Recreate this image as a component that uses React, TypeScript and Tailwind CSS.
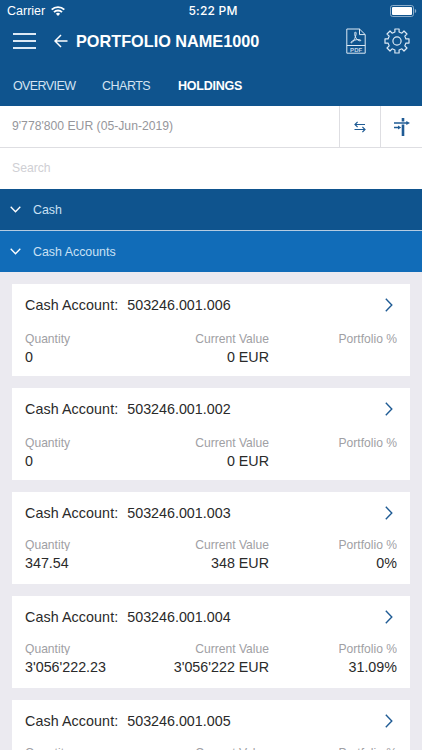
import { clsx } from 'clsx';

interface Holding {
  account: string;
  quantity: string;
  value: string;
  percent?: string;
}

const holdings: Holding[] = [
  { account: '503246.001.006', quantity: '0', value: '0 EUR' },
  { account: '503246.001.002', quantity: '0', value: '0 EUR' },
  { account: '503246.001.003', quantity: '347.54', value: '348 EUR', percent: '0%' },
  { account: '503246.001.004', quantity: "3'056'222.23", value: "3'056'222 EUR", percent: '31.09%' },
];

// Eight flat teeth, four points each
const gearPath =
  'M' +
  Array.from({ length: 8 })
    .flatMap((_, i) =>
      [
        [9.2, -13],
        [12.2, -10],
        [12.2, 10],
        [9.2, 13],
      ].map(([r, deg]) => {
        const a = ((i * 45 + deg) * Math.PI) / 180;
        return `${(13 + r * Math.cos(a)).toFixed(2)} ${(13 + r * Math.sin(a)).toFixed(2)}`;
      })
    )
    .join('L') +
  'Z';

const WifiIcon = () => (
  <svg width="14" height="10" viewBox="0 0 14 10" fill="none" stroke="#fff" strokeWidth="1.9">
    <path d="M.7 3.7a8.9 8.9 0 0 1 12.6 0" />
    <path d="M3 6.2a5.6 5.6 0 0 1 8 0" />
    <path d="M7 9.9 4.9 7.8a3 3 0 0 1 4.2 0Z" fill="#fff" stroke="none" />
  </svg>
);

const BatteryIcon = () => (
  <svg width="27" height="12" viewBox="0 0 27 12">
    <rect x=".5" y=".5" width="23" height="11" rx="2.2" fill="none" stroke="#8badcb" />
    <rect x="2" y="2" width="20" height="8" rx="1" fill="#fff" />
    <path d="M24.8 4v4c1-.3 1.4-1.1 1.4-2s-.4-1.7-1.4-2Z" fill="#8badcb" />
  </svg>
);

const PdfIcon = () => (
  <svg width="20" height="26" viewBox="0 0 20 26" fill="none" stroke="#dce9f5" strokeWidth="1">
    <path d="M.8 1h12.700l5.700 5.600v18.600H.8Z" />
    <path d="M13.500 1v5.600h5.700M.8 17.500h18.400" />
    <path
      d="M9.300 4c1.400 0 .8 3.600-.6 6.600-1.200 2.500-2.900 4.900-3.700 4.100-.9-1 3.500-2.800 5.900-3.100 1.700-.2 4-.1 3.800.9-.3 1.100-3.300-.3-4.700-2.400C8.600 8 8.300 4 9.300 4Z"
      strokeWidth="1"
    />
    <text x="10.200" y="23.800" textAnchor="middle" fontSize="6" fontWeight="bold" letterSpacing=".1" fill="#c3d7e9" stroke="none">
      PDF
    </text>
  </svg>
);

const GearIcon = () => (
  <svg width="26" height="26" viewBox="0 0 26 26" fill="none" stroke="#dce9f5" strokeWidth="1.200" strokeLinejoin="round">
    <path d={gearPath} />
    <circle cx="13" cy="13" r="4.100" />
  </svg>
);

const SwapIcon = () => (
  <svg width="12" height="12" viewBox="0 0 12 12" fill="none" stroke="#1f5b94" strokeWidth="1.200">
    <path d="M11 3.500H1M3.600.9 1 3.500l2.600 2.600M.5 8.500H11M8.400 5.900 11 8.500l-2.600 2.600" />
  </svg>
);

const AlignIcon = () => (
  <svg width="16" height="18" viewBox="0 0 16 18" fill="none" stroke="#1f5b94">
    <path d="M9 0v3.500M9 6.500V18" strokeWidth="2.600" />
    <path d="M0 5h13M0 9.500h5" strokeWidth="1.300" />
    <path d="M12.300 2.900v4.200L16 5ZM4 7.400v4.200l3.200-2.100Z" fill="#1f5b94" stroke="none" />
  </svg>
);

const SectionRow = ({ title, className }: { title: string; className: string }) => (
  <div className={clsx('flex shrink-0 items-center pl-[10px] text-[12.4px] text-[#c9e0f4]', className)}>
    <svg width="11" height="7" viewBox="0 0 11 7" fill="none" stroke="#fff" strokeWidth="1.300">
      <path d="m.7.7 4.800 5L10.300.7" />
    </svg>
    <span className="ml-3 pt-px">{title}</span>
  </div>
);

const Cell = ({ label, value, right, clip }: { label: string; value?: string; right?: boolean; clip?: boolean }) => (
  <div className={clsx('flex flex-col', right && 'items-end')}>
    <span className={clsx('text-[12.1px] leading-[14px] text-[#a0a0a4]', clip ? 'h-[13px] overflow-hidden' : 'h-[14px]')}>
      {label}
    </span>
    <span className={clsx('text-[14.3px] leading-4 text-[#2a2a2a]', clip ? 'mt-[4px]' : 'mt-[3px]')}>{value}</span>
  </div>
);

const CardTitle = ({ account }: { account: string }) => (
  <div className="flex h-[42px] items-center justify-between pr-[4px] text-[14.3px] text-[#2a2a2a]">
    <div className="flex gap-[9px] pt-[2px]">
      <span className="tracking-[0.08px]">Cash Account:</span>
      <span>{account}</span>
    </div>
    <svg width="8" height="14" viewBox="0 0 8 14" fill="none" stroke="#1f5b94" strokeWidth="1.400">
      <path d="m.8.8 6 6.200-6 6.200" />
    </svg>
  </div>
);

const HoldingCard = ({ holding }: { holding: Holding }) => {
  const filled = Boolean(holding.percent);
  return (
    <div className="h-[92px] shrink-0 bg-white px-[13px]">
      <CardTitle account={holding.account} />
      <div className={clsx('grid grid-cols-[122px_122px_128px]', filled ? 'pt-[4px]' : 'pt-[6px]')}>
        <Cell label="Quantity" value={holding.quantity} clip={filled} />
        <Cell label="Current Value" value={holding.value} right clip={filled} />
        <Cell label="Portfolio %" value={holding.percent} right clip={filled} />
      </div>
    </div>
  );
};

export default function App() {
  return (
    <div className="flex h-[750px] w-[422px] flex-col overflow-hidden bg-[#ebeaf0] font-['Liberation_Sans',Arial,sans-serif]">
      <header className="flex h-[106px] shrink-0 flex-col bg-[#0f548e] text-white">
        <div className="grid h-[22px] grid-cols-3 items-center pl-[7px] pr-[5px] text-[12.5px]">
          <div className="flex items-center gap-[6px]">
            <span>Carrier</span>
            <WifiIcon />
          </div>
          <span className="pl-[2px] text-center font-['Inter',sans-serif] text-[12px] font-medium tracking-[0.2px]">
            5:22 PM
          </span>
          <div className="flex justify-end">
            <BatteryIcon />
          </div>
        </div>
        <div className="flex h-[38px] items-center pl-[13px] pr-3">
          <div className="flex w-[23px] flex-col gap-[5px]">
            <div className="h-[2px] bg-[#dce9f5]" />
            <div className="h-[2px] bg-[#dce9f5]" />
            <div className="h-[2px] bg-[#dce9f5]" />
          </div>
          <svg className="ml-[18px]" width="14" height="14" viewBox="0 0 14 14" fill="none" stroke="#fff" strokeWidth="1.500">
            <path d="M13.500 7H1M7 1 1 7l6 6" />
          </svg>
          <h1 className="ml-2 text-[16.25px] font-bold">PORTFOLIO NAME1000</h1>
          <div className="ml-auto flex items-center gap-[18px]">
            <PdfIcon />
            <GearIcon />
          </div>
        </div>
        <nav className="flex h-[46px] items-center pl-[13px] pt-[7px] text-[12.5px] text-[#d3e3f2]">
          <span className="w-[89px] tracking-[-0.6px]">OVERVIEW</span>
          <span className="w-[76px] tracking-[-0.5px]">CHARTS</span>
          <span className="font-bold tracking-[-0.25px] text-white">HOLDINGS</span>
        </nav>
      </header>

      <div className="flex h-[42px] shrink-0 border-b border-[#dedee2] bg-white">
        <div className="flex flex-1 items-center pl-3 text-[12.2px] text-[#96969b]">9'778'800 EUR (05-Jun-2019)</div>
        <div className="flex w-[41px] items-center justify-center border-l border-[#dedee2]">
          <SwapIcon />
        </div>
        <div className="flex w-[42px] items-center justify-center border-l border-[#dedee2]">
          <AlignIcon />
        </div>
      </div>
      <div className="flex h-[41px] shrink-0 items-center bg-white pl-3 text-[12.2px] text-[#cfcfd4]">Search</div>

      <SectionRow title="Cash" className="h-[41px] bg-[#0f548e]" />
      <SectionRow title="Cash Accounts" className="h-[42px] border-t border-[#b5cce2] bg-[#116cb8]" />

      <div className="flex flex-col gap-3 px-3 pt-3">
        {holdings.map((holding) => (
          <HoldingCard key={holding.account} holding={holding} />
        ))}
        {/* last card runs off the bottom of the screen */}
        <div className="h-[50px] shrink-0 overflow-hidden bg-white px-[13px]">
          <CardTitle account="503246.001.005" />
          <div className="grid grid-cols-[122px_122px_128px] pt-[4px]">
            <Cell label="Quantity" clip />
            <Cell label="Current Value" right clip />
            <Cell label="Portfolio %" right clip />
          </div>
        </div>
      </div>
    </div>
  );
}
